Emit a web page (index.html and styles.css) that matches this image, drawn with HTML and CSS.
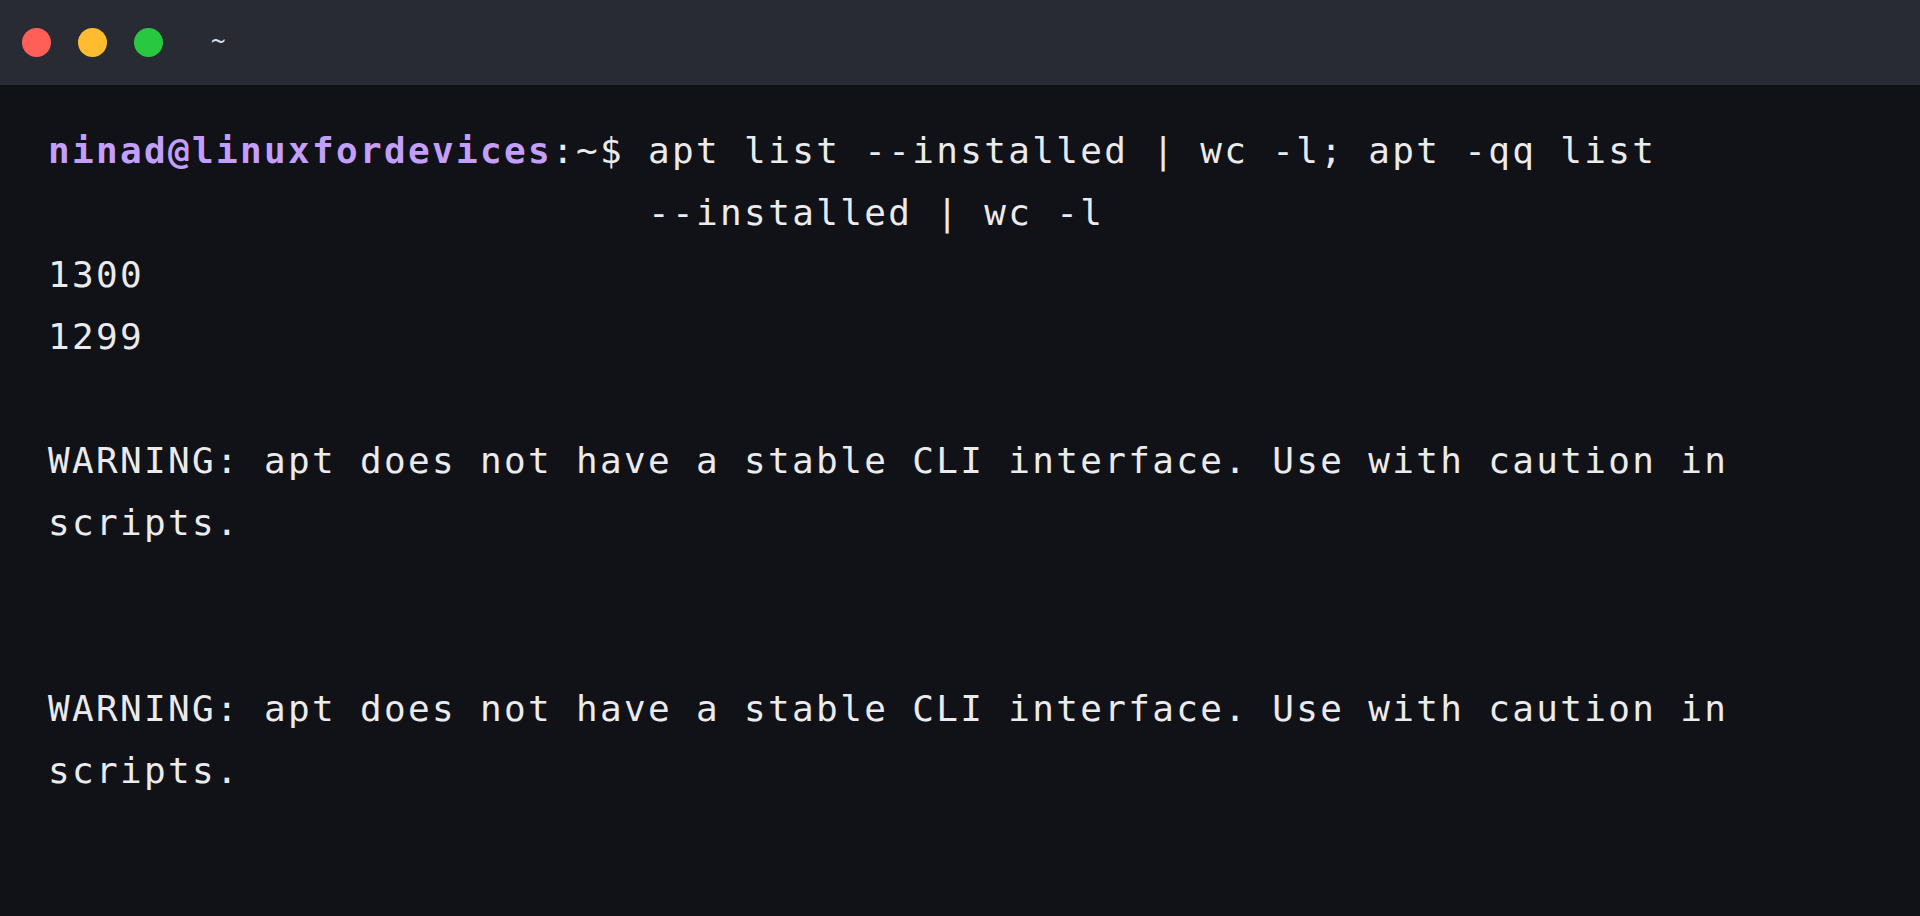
FILE: index.html
```html
<!DOCTYPE html>
<html lang="en">
<head>
<meta charset="utf-8">
<title>Terminal</title>
<link rel="stylesheet" href="styles.css">
</head>
<body>
<div class="window">
  <header class="titlebar">
    <span class="dot dot-red"></span>
    <span class="dot dot-yellow"></span>
    <span class="dot dot-green"></span>
    <span class="title">~</span>
  </header>
  <main class="term">
    <div class="cmdline">
      <span class="prompt"><span class="user">ninad@linuxfordevices</span>:~$&nbsp;</span>
      <span class="cmd">apt list <span class="tok">--installed</span> | wc <span class="tok">-l;</span> apt <span class="tok">-qq</span> list <span class="tok">--installed</span> | wc <span class="tok">-l</span></span>
    </div>
    <div class="line">1300</div>
    <div class="line">1299</div>
    <div class="line blank"></div>
    <div class="line">WARNING: apt does not have a stable CLI interface. Use with caution in scripts.</div>
    <div class="line blank"></div>
    <div class="line blank"></div>
    <div class="line">WARNING: apt does not have a stable CLI interface. Use with caution in scripts.</div>
  </main>
</div>
</body>
</html>
```
FILE: styles.css
```css
html, body {
  margin: 0;
  padding: 0;
  height: 100%;
  background: #111217;
}
.window {
  display: flex;
  flex-direction: column;
  height: 100%;
}
.titlebar {
  display: flex;
  align-items: center;
  height: 85px;
  flex: none;
  background: #282b34;
  padding-left: 22px;
  box-sizing: border-box;
}
.dot {
  width: 29px;
  height: 29px;
  border-radius: 50%;
  margin-right: 27px;
  flex: none;
}
.dot-red { background: #ff5f57; }
.dot-yellow { background: #febc2e; }
.dot-green { background: #28c840; }
.title {
  margin-left: 21px;
  font-family: "DejaVu Sans Mono", monospace;
  font-size: 24px;
  color: #dcdde2;
  line-height: 1;
  position: relative;
  top: -2px;
}
.term {
  flex: 1;
  padding: 35px 48px 0 48px;
  font-family: "DejaVu Sans Mono", monospace;
  font-size: 36px;
  letter-spacing: 2.33px;
  line-height: 62px;
  color: #ebebed;
}
.cmdline {
  display: flex;
}
.prompt {
  flex: none;
  white-space: pre;
}
.user {
  color: #c39ffb;
  font-weight: bold;
}
.cmd {
  flex: 1;
  max-width: 1224px;
}
.tok {
  white-space: nowrap;
}
.line {
  white-space: pre-wrap;
  max-width: 1824px;
}
.blank {
  height: 62px;
}
```
